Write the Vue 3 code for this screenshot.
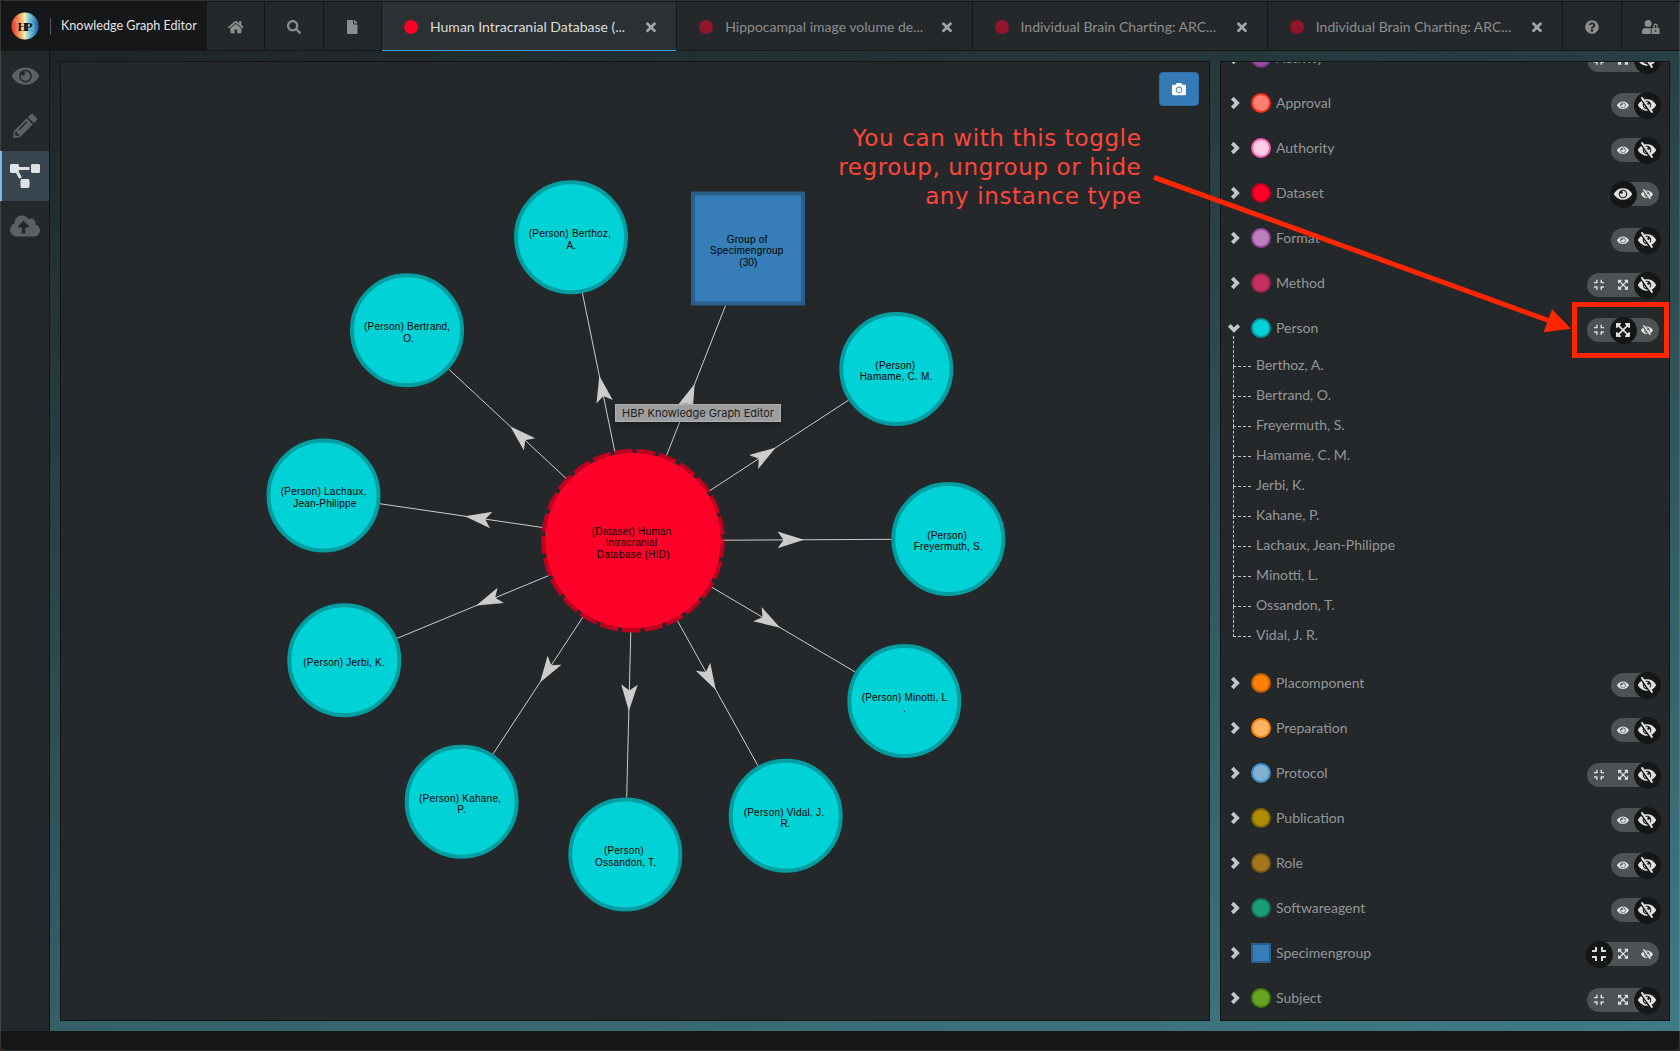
<script setup>
const icons = {
  home: { w: 576, d: 'M488 312.7V456c0 13.3-10.7 24-24 24H348c-6.6 0-12-5.4-12-12V356c0-6.6-5.4-12-12-12h-72c-6.6 0-12 5.4-12 12v112c0 6.6-5.4 12-12 12H112c-13.3 0-24-10.7-24-24V312.7c0-3.6 1.6-7 4.4-9.3l188-154.8c4.4-3.6 10.8-3.6 15.3 0l188 154.8c2.7 2.3 4.3 5.7 4.3 9.3zm83.6-60.9L488 182.9V44.4c0-6.6-5.4-12-12-12h-56c-6.6 0-12 5.4-12 12V117l-89.5-73.7c-17.7-14.6-43.3-14.6-61 0L4.4 251.8c-5.1 4.2-5.8 11.8-1.6 16.9l25.5 31c4.2 5.1 11.8 5.8 16.9 1.6l235.2-193.7c4.4-3.6 10.8-3.6 15.3 0l235.2 193.7c5.1 4.2 12.7 3.5 16.9-1.6l25.5-31c4.2-5.2 3.4-12.7-1.7-16.9z' },
  search: { w: 512, d: 'M505 442.7L405.3 343c-4.5-4.5-10.6-7-17-7H372c27.6-35.3 44-79.7 44-128C416 93.1 322.9 0 208 0S0 93.1 0 208s93.1 208 208 208c48.3 0 92.7-16.4 128-44v16.3c0 6.4 2.5 12.5 7 17l99.7 99.7c9.4 9.4 24.6 9.4 33.9 0l28.3-28.3c9.4-9.4 9.4-24.6.1-34zM208 336c-70.7 0-128-57.2-128-128 0-70.7 57.2-128 128-128 70.7 0 128 57.2 128 128 0 70.7-57.2 128-128 128z' },
  file: { w: 384, d: 'M224 136V0H24C10.7 0 0 10.7 0 24v464c0 13.3 10.7 24 24 24h336c13.3 0 24-10.7 24-24V160H248c-13.2 0-24-10.8-24-24zm160-14.1v6.1H256V0h6.1c6.4 0 12.5 2.5 17 7l97.9 98c4.5 4.5 7 10.6 7 16.9z' },
  times: { w: 352, d: 'M242.72 256l100.07-100.07c12.28-12.28 12.28-32.19 0-44.48l-22.24-22.24c-12.28-12.28-32.19-12.28-44.48 0L176 189.28 75.93 89.21c-12.28-12.28-32.19-12.28-44.48 0L9.21 111.45c-12.28 12.28-12.28 32.19 0 44.48L109.28 256 9.21 356.07c-12.28 12.28-12.28 32.19 0 44.48l22.24 22.24c12.28 12.28 32.2 12.28 44.48 0L176 322.72l100.07 100.07c12.28 12.28 32.2 12.28 44.48 0l22.24-22.24c12.28-12.28 12.28-32.19 0-44.48L242.72 256z' },
  help: { w: 512, d: 'M504 256c0 136.997-111.043 248-248 248S8 392.997 8 256C8 119.083 119.043 8 256 8s248 111.083 248 248zM262.655 90c-54.497 0-89.255 22.957-116.549 63.758-3.536 5.286-2.353 12.415 2.715 16.258l34.699 26.31c5.205 3.947 12.621 3.008 16.665-2.122 17.864-22.658 30.113-35.797 57.303-35.797 20.429 0 45.698 13.148 45.698 32.958 0 14.976-12.363 22.667-32.534 33.976C247.128 238.528 216 254.941 216 296v4c0 6.627 5.373 12 12 12h56c6.627 0 12-5.373 12-12v-1.333c0-28.462 83.186-29.647 83.186-106.667 0-58.002-60.165-102-116.531-102zM256 338c-25.365 0-46 20.635-46 46 0 25.364 20.635 46 46 46s46-20.636 46-46c0-25.365-20.635-46-46-46z' },
  userLock: { w: 640, d: 'M224 256A128 128 0 1 0 96 128a128 128 0 0 0 128 128zm96 64a63.08 63.08 0 0 1 8.1-30.5c-4.8-.5-9.5-1.5-14.5-1.5h-16.7a174.08 174.08 0 0 1-145.8 0h-16.7A134.43 134.43 0 0 0 0 422.4V464a48 48 0 0 0 48 48h280.9a63.54 63.54 0 0 1-8.9-32zm288-32h-32v-80a80 80 0 0 0-160 0v80h-32a32 32 0 0 0-32 32v160a32 32 0 0 0 32 32h224a32 32 0 0 0 32-32V320a32 32 0 0 0-32-32zM496 432a32 32 0 1 1 32-32 32 32 0 0 1-32 32zm32-144h-64v-80a32 32 0 0 1 64 0z' },
  eye: { w: 576, d: 'M569.354 231.631C512.969 135.949 407.81 72 288 72 168.14 72 63.004 135.994 6.646 231.631a47.999 47.999 0 0 0 0 48.739C63.031 376.051 168.19 440 288 440c119.86 0 224.996-63.994 281.354-159.631a47.997 47.997 0 0 0 0-48.738zM288 392c-75.162 0-136-60.827-136-136 0-75.162 60.826-136 136-136 75.162 0 136 60.826 136 136 0 75.162-60.826 136-136 136zm104-136c0 57.438-46.562 104-104 104s-104-46.562-104-104c0-17.708 4.431-34.379 12.236-48.973l-.001.032c0 23.651 19.173 42.823 42.824 42.823s42.824-19.173 42.824-42.823c0-23.651-19.173-42.824-42.824-42.824l-.032.001C253.621 156.431 270.292 152 288 152c57.438 0 104 46.562 104 104z' },
  eyeSlash: { w: 576, d: 'M286.693 391.984l32.579 46.542A333.958 333.958 0 0 1 288 440C168.19 440 63.031 376.051 6.646 280.369a47.999 47.999 0 0 1 0-48.739c24.023-40.766 56.913-75.775 96.024-102.537l57.077 81.539C154.736 224.82 152 240.087 152 256c0 74.736 60.135 135.282 134.693 135.984zm282.661-111.615c-31.667 53.737-78.747 97.46-135.175 125.475l.011.015 41.47 59.2c7.6 10.86 4.96 25.82-5.9 33.42l-13.11 9.18c-10.86 7.6-25.82 4.96-33.42-5.9L100.34 46.94c-7.6-10.86-4.96-25.82 5.9-33.42l13.11-9.18c10.86-7.6 25.82-4.96 33.42 5.9l51.038 72.617C230.68 75.776 258.905 72 288 72c119.81 0 224.969 63.949 281.354 159.631a48.002 48.002 0 0 1 0 48.738zM424 256c0-75.174-60.838-136-136-136-17.939 0-35.056 3.473-50.729 9.772l19.299 27.058c25.869-8.171 55.044-6.163 80.4 7.41h-.03c-23.65 0-42.82 19.17-42.82 42.82 0 23.626 19.147 42.82 42.82 42.82 23.65 0 42.82-19.17 42.82-42.82v-.03c18.462 34.49 16.312 77.914-8.25 110.95v.01l19.314 27.061C411.496 321.2 424 290.074 424 256zM262.014 356.727l-77.53-110.757c-5.014 52.387 29.314 98.354 77.53 110.757z' },
  pencil: { w: 512, d: 'M497.9 142.1l-46.1 46.1c-4.7 4.7-12.3 4.7-17 0l-111-111c-4.7-4.7-4.7-12.3 0-17l46.1-46.1c18.7-18.7 49.1-18.7 67.9 0l60.1 60.1c18.8 18.7 18.8 49.1 0 67.9zM284.2 99.8L21.6 362.4.4 483.9c-2.9 16.4 11.4 30.6 27.8 27.8l121.5-21.3 262.6-262.6c4.7-4.7 4.7-12.3 0-17l-111-111c-4.8-4.7-12.4-4.7-17.1 0zM124.1 339.9c-5.5-5.5-5.5-14.3 0-19.8l154-154c5.5-5.5 14.3-5.5 19.8 0s5.5 14.3 0 19.8l-154 154c-5.5 5.5-14.3 5.5-19.8 0zM88 424h48v36.3l-64.5 11.3-31.1-31.1L51.7 376H88v48z' },
  diagram: { w: 640, d: 'M384 320H256c-17.67 0-32 14.33-32 32v128c0 17.67 14.33 32 32 32h128c17.67 0 32-14.33 32-32V352c0-17.67-14.33-32-32-32zM192 32c0-17.67-14.33-32-32-32H32C14.33 0 0 14.33 0 32v128c0 17.67 14.33 32 32 32h95.72l73.16 128.04C211.98 300.98 232.4 288 256 288h.28L192 175.51V128h224V64H192V32zM608 0H480c-17.67 0-32 14.33-32 32v128c0 17.67 14.33 32 32 32h128c17.67 0 32-14.33 32-32V32c0-17.67-14.33-32-32-32z' },
  cloud: { w: 640, d: 'M537.6 226.6c4.1-10.7 6.4-22.4 6.4-34.6 0-53-43-96-96-96-19.7 0-38.1 6-53.3 16.2C367 64.2 315.3 32 256 32c-88.4 0-160 71.6-160 160 0 2.7.1 5.4.2 8.1C40.2 219.8 0 273.2 0 336c0 79.5 64.5 144 144 144h368c70.7 0 128-57.3 128-128 0-61.9-44-113.6-102.4-125.4zM393.4 288H328v112c0 8.8-7.2 16-16 16h-48c-8.8 0-16-7.2-16-16V288h-65.4c-14.3 0-21.4-17.2-11.3-27.3l105.4-105.4c6.2-6.2 16.4-6.2 22.6 0l105.4 105.4c10.1 10.1 2.9 27.3-11.3 27.3z' },
  camera: { w: 512, d: 'M512 144v288c0 26.5-21.5 48-48 48H48c-26.5 0-48-21.5-48-48V144c0-26.5 21.5-48 48-48h88l12.3-32.9c7-18.7 24.9-31.1 44.9-31.1h125.5c20 0 37.9 12.4 44.9 31.1L376 96h88c26.5 0 48 21.5 48 48zM376 288c0-66.2-53.8-120-120-120s-120 53.8-120 120 53.8 120 120 120 120-53.8 120-120zm-32 0c0 48.5-39.5 88-88 88s-88-39.5-88-88 39.5-88 88-88 88 39.5 88 88z' },
  compress: { w: 448, d: 'M436 192H312c-13.3 0-24-10.7-24-24V44c0-6.6 5.4-12 12-12h40c6.6 0 12 5.4 12 12v84h84c6.6 0 12 5.4 12 12v40c0 6.6-5.4 12-12 12zm-276-24V44c0-6.6-5.4-12-12-12h-40c-6.6 0-12 5.4-12 12v84H12c-6.6 0-12 5.4-12 12v40c0 6.6 5.4 12 12 12h124c13.3 0 24-10.7 24-24zm0 300V344c0-13.3-10.7-24-24-24H12c-6.6 0-12 5.4-12 12v40c0 6.6 5.4 12 12 12h84v84c0 6.6 5.4 12 12 12h40c6.6 0 12-5.4 12-12zm192 0v-84h84c6.6 0 12-5.4 12-12v-40c0-6.6-5.4-12-12-12H312c-13.3 0-24 10.7-24 24v124c0 6.6 5.4 12 12 12h40c6.6 0 12-5.4 12-12z' },
  expand: { w: 448, d: 'M448 344v112a23.94 23.94 0 0 1-24 24H312c-21.39 0-32.09-25.9-17-41l36.2-36.2L224 295.6 116.77 402.9 153 439c15.09 15.1 4.39 41-17 41H24a23.94 23.94 0 0 1-24-24V344c0-21.4 25.89-32.1 41-17l36.19 36.2L184.46 256 77.18 148.7 41 185c-15.1 15.1-41 4.4-41-17V56a23.94 23.94 0 0 1 24-24h112c21.39 0 32.09 25.9 17 41l-36.2 36.2L224 216.4l107.23-107.3L295 73c-15.09-15.1-4.39-41 17-41h112a23.94 23.94 0 0 1 24 24v112c0 21.4-25.89 32.1-41 17l-36.19-36.2L263.54 256l107.28 107.3L407 327.1c15.1-15.2 41-4.5 41 16.9z' },
}
const box = (name) => `0 0 ${icons[name].w} 512`
const iconWidth = (name, on) => {
  const size = on ? 16 : icons[name].w > 500 ? 10.6 : 11.6
  return `${(icons[name].w / 512) * size}px`
}

const tools = ['home', 'search', 'file']
const tabs = [
  { label: 'Human Intracranial Database (...', active: true },
  { label: 'Hippocampal image volume de...' },
  { label: 'Individual Brain Charting: ARC...' },
  { label: 'Individual Brain Charting: ARC...' },
]
const accountTools = ['help', 'userLock']
const modes = ['eye', 'pencil', 'diagram', 'cloud']

const two = ['eye', 'eyeSlash']
const three = ['compress', 'expand', 'eyeSlash']
const types = [
  { name: 'Activity', fill: '#984ea3', edge: '#7b3a86', options: three, on: 'eyeSlash' },
  { name: 'Approval', fill: '#fb8072', edge: '#ff2a14', options: two, on: 'eyeSlash' },
  { name: 'Authority', fill: '#fccde5', edge: '#ff58ae', options: two, on: 'eyeSlash' },
  { name: 'Dataset', fill: '#ff0029', edge: '#b8001e', options: two, on: 'eye' },
  { name: 'Format', fill: '#bc80bd', edge: '#96499a', options: two, on: 'eyeSlash' },
  { name: 'Method', fill: '#c42e60', edge: '#96254b', options: three, on: 'eyeSlash' },
  {
    name: 'Person', fill: '#00d2d5', edge: '#009b9e', options: three, on: 'expand',
    items: ['Berthoz, A.', 'Bertrand, O.', 'Freyermuth, S.', 'Hamame, C. M.', 'Jerbi, K.', 'Kahane, P.', 'Lachaux, Jean-Philippe', 'Minotti, L.', 'Ossandon, T.', 'Vidal, J. R.'],
  },
  { name: 'Placomponent', fill: '#ff7f00', edge: '#b85d06', options: two, on: 'eyeSlash' },
  { name: 'Preparation', fill: '#fdb462', edge: '#fb8406', options: two, on: 'eyeSlash' },
  { name: 'Protocol', fill: '#80b1d3', edge: '#3f88c0', options: three, on: 'eyeSlash' },
  { name: 'Publication', fill: '#af8d00', edge: '#7c6500', options: two, on: 'eyeSlash' },
  { name: 'Role', fill: '#a6761d', edge: '#7d5917', options: two, on: 'eyeSlash' },
  { name: 'Softwareagent', fill: '#1b9e77', edge: '#15735a', options: two, on: 'eyeSlash' },
  { name: 'Specimengroup', fill: '#377eb8', edge: '#295d8a', square: true, options: three, on: 'compress' },
  { name: 'Subject', fill: '#66a61e', edge: '#4a7a16', options: three, on: 'eyeSlash' },
]

// Graph coordinates share the window's origin; the canvas viewBox offsets them.
const hub = { x: 633, y: 540.7, r: 91.8 }
const hubLines = [
  ['(Dataset) Human', 631.5, 534.7, 79.7],
  ['Intracranial', 631.3, 545.7, 51.3],
  ['Database (HID)', 633.2, 557.7, 73],
]
const nodes = [
  { x: 571, y: 237.2, lines: [['(Person) Berthoz,', 569.7, 236.7, 82], ['A.', 571.3, 249, 9.5]] },
  { x: 748, y: 248.5, square: true, lines: [['Group of', 747, 242.7, 40.7], ['Specimengroup', 746.7, 253.7, 73.3], ['(30)', 748.3, 265.7, 18]] },
  { x: 896.3, y: 369, lines: [['(Person)', 895.2, 369, 39.7], ['Hamame, C. M.', 896, 380, 72.7]] },
  { x: 948.3, y: 539, lines: [['(Person)', 947, 538.7, 39.7], ['Freyermuth, S.', 948.2, 549.7, 69]] },
  { x: 904.3, y: 701, lines: [['(Person) Minotti, L', 904.3, 700.7, 85.3], ['.', 904.3, 712, 2.8]] },
  { x: 785.7, y: 815.7, lines: [['(Person) Vidal, J.', 783.8, 815.7, 80.3], ['R.', 785.3, 826.7, 9.6]] },
  { x: 625.3, y: 854.5, lines: [['(Person)', 623.8, 853.7, 39.7], ['Ossandon, T.', 625.5, 865.7, 61]] },
  { x: 461.7, y: 801.7, lines: [['(Person) Kahane,', 460, 801.7, 82], ['P.', 461.5, 812.7, 8.6]] },
  { x: 344.3, y: 660.2, lines: [['(Person) Jerbi, K.', 344, 665.7, 81.5]] },
  { x: 323.5, y: 495.5, lines: [['(Person) Lachaux,', 323.5, 494.7, 85.7], ['Jean-Philippe', 324.8, 506.7, 63]] },
  { x: 407, y: 330.3, lines: [['(Person) Bertrand,', 407, 329.7, 86], ['O.', 408.3, 341.7, 10.3]] },
]
const edges = nodes.map((n) => {
  const dx = n.x - hub.x
  const dy = n.y - hub.y
  const len = Math.hypot(dx, dy)
  const ux = dx / len
  const uy = dy / len
  const end = len - (n.square ? 57 / Math.abs(uy) : 57)
  const mid = (hub.r + end) / 2 - 4
  return {
    x1: hub.x + ux * (hub.r - 3), y1: hub.y + uy * (hub.r - 3),
    x2: hub.x + ux * end, y2: hub.y + uy * end,
    arrow: `translate(${hub.x + ux * mid} ${hub.y + uy * mid}) rotate(${(Math.atan2(dy, dx) * 180) / Math.PI})`,
  }
})
const labels = [...hubLines, ...nodes.flatMap((n) => n.lines)]
</script>

<template>
  <div class="window">
    <header class="topbar">
      <div class="brand">
        <svg class="logo" viewBox="0 0 28 28">
          <defs>
            <linearGradient id="brain" x1="0" x2="1" y1="0" y2="0">
              <stop offset="0" stop-color="#e2313a" />
              <stop offset=".2" stop-color="#ee7748" />
              <stop offset=".38" stop-color="#f7bd6c" />
              <stop offset=".49" stop-color="#fdf0b0" />
              <stop offset=".53" stop-color="#c3e6d6" />
              <stop offset=".72" stop-color="#5bb4cf" />
              <stop offset="1" stop-color="#2457a4" />
            </linearGradient>
          </defs>
          <circle cx="14" cy="14" r="13.6" fill="url(#brain)" />
          <g fill="none" stroke="#fff" stroke-opacity=".28" stroke-width="1">
            <path d="M3 9c3-1 4 1 3 3M5 19c2-2 4 0 4 3M8 4c1 2 3 1 4 3M19 3c0 3 3 2 4 5M24 14c-3 0-2 3-1 5M18 24c0-3 3-2 4-4" />
          </g>
          <text class="logo-letter" x="6.6" y="18.6">H</text>
          <text class="logo-letter" x="13.8" y="18.6">P</text>
        </svg>
        <span class="divider"></span>
        <span class="title">Knowledge Graph Editor</span>
      </div>
      <button v-for="t in tools" :key="t" class="tool" :class="t">
        <svg :viewBox="box(t)" class="glyph"><path :d="icons[t].d" /></svg>
      </button>
      <div v-for="(tab, i) in tabs" :key="i" class="tab" :class="{ active: tab.active }">
        <span class="tab-dot"></span>
        <span class="tab-label">{{ tab.label }}</span>
        <svg :viewBox="box('times')" class="close"><path :d="icons.times.d" /></svg>
      </div>
      <button v-for="t in accountTools" :key="t" class="tool" :class="t">
        <svg :viewBox="box(t)" class="glyph"><path :d="icons[t].d" /></svg>
      </button>
    </header>

    <div class="body">
      <nav class="modes">
        <div v-for="m in modes" :key="m" class="mode" :class="{ active: m === 'diagram' }">
          <svg :viewBox="box(m)" :class="m"><path :d="icons[m].d" /></svg>
        </div>
      </nav>

      <main class="stage">
        <section class="panel graph">
          <svg class="canvas" viewBox="61 62 1148 958">
            <g v-for="(e, i) in edges" :key="'e' + i">
              <line :x1="e.x1" :y1="e.y1" :x2="e.x2" :y2="e.y2" class="edge" />
              <path d="M0 0L-26.5 -8.3L-20.5 0L-26.5 8.3Z" :transform="e.arrow" class="arrow" />
            </g>
            <circle :cx="hub.x" :cy="hub.y" r="88" fill="#ff0029" />
            <circle :cx="hub.x" :cy="hub.y" r="89.8" class="hub-ring" pathLength="360" :transform="`rotate(-1.2 ${hub.x} ${hub.y})`" />
            <g v-for="(n, i) in nodes" :key="'n' + i">
              <rect v-if="n.square" :x="n.x - 55" :y="n.y - 55" width="110" height="110" class="group-node" />
              <circle v-else :cx="n.x" :cy="n.y" r="55" class="person-node" />
            </g>
            <text v-for="(l, i) in labels" :key="'t' + i" class="node-label" :x="l[1]" :y="l[2]" :textLength="l[3]">{{ l[0] }}</text>
          </svg>
          <button class="snapshot">
            <svg :viewBox="box('camera')"><path :d="icons.camera.d" /></svg>
          </button>
          <div class="tooltip">HBP Knowledge Graph Editor</div>
        </section>

        <aside class="panel legend">
          <div class="legend-scroll">
            <div v-for="t in types" :key="t.name">
              <div class="type">
                <svg v-if="t.items" class="chevron down" viewBox="0 0 12 9"><polyline points="1.2,1.3 6,6.1 10.8,1.3" /></svg>
                <svg v-else class="chevron" viewBox="0 0 9 12"><polyline points="1.3,1.2 6.1,6 1.3,10.8" /></svg>
                <span class="swatch" :class="{ square: t.square }" :style="{ background: t.fill, borderColor: t.edge }"></span>
                <span class="type-name">{{ t.name }}</span>
                <span class="toggle" :class="{ raised: t.on === 'eye' || t.on === 'compress' }">
                  <span v-for="o in t.options" :key="o" class="option" :class="{ on: o === t.on }">
                    <svg :viewBox="box(o)" :style="{ width: iconWidth(o, o === t.on) }"><path :d="icons[o].d" /></svg>
                  </span>
                </span>
              </div>
              <ul v-if="t.items" class="instances">
                <li v-for="name in t.items" :key="name">{{ name }}</li>
              </ul>
            </div>
          </div>
        </aside>
      </main>
    </div>
    <footer class="statusbar"></footer>

    <p class="note">You can with this toggle<br />regroup, ungroup or hide<br />any instance type</p>
    <svg class="pointer" viewBox="0 0 1680 1051">
      <line x1="1154" y1="177.3" x2="1550" y2="321" />
      <polygon points="1571,328.7 1552,309.3 1543.7,332.2" />
      <rect x="1574.5" y="304.5" width="92" height="51" />
    </svg>
    <div class="frame"></div>
  </div>
</template>

<style>
body {
  margin: 0;
  background: #35231f;
}
</style>

<style scoped>
.window {
  position: relative;
  box-sizing: border-box;
  width: 1680px;
  height: 1051px;
  overflow: hidden;
  display: flex;
  flex-direction: column;
  border-radius: 0 0 6px 6px;
  font-family: Lato, sans-serif;
  font-size: 14px;
  color: #94979a;
  background: linear-gradient(165deg, #1c2022, #407c87);
}
button {
  border: 0;
  padding: 0;
  margin: 0;
}
svg {
  display: block;
  fill: currentColor;
}
.topbar {
  box-sizing: border-box;
  height: 51px;
  flex: none;
  display: flex;
  padding-top: 2px;
  background: #161719;
  gap: 1px;
}
.brand {
  width: 206px;
  flex: none;
  display: flex;
  align-items: center;
}
.logo {
  flex: none;
  width: 28px;
  height: 28px;
  margin: 0 0 1px 11px;
}
.logo-letter {
  font: bold 12.5px "Liberation Serif", serif;
  fill: #10131c;
}
.divider {
  flex: none;
  width: 1px;
  height: 17px;
  margin: 0 10px 0 11px;
  background: #55585a;
}
.title {
  color: #e3e4e4;
  white-space: nowrap;
  font-size: 12.6px;
  margin-top: -2px;
}
.tool {
  width: 57px;
  height: 48px;
  display: flex;
  align-items: center;
  justify-content: center;
  background: #24282a;
  color: #8c8e8f;
}
.tool.search {
  width: 58px;
}
.tool.userLock {
  flex: 1;
}
.tool.help {
  width: 58px;
}
.glyph {
  height: 14px;
  margin-top: 2px;
}
.tab {
  box-sizing: border-box;
  width: 294.25px;
  flex: none;
  height: 48px;
  display: flex;
  align-items: center;
  padding: 2px 20px 0 22px;
  background: #24282a;
  color: #8c8e8f;
}
.tab.active {
  height: 49px;
  border-bottom: 1px solid #3fa2e6;
  background: #2b3032;
  color: #dcdddd;
}
.tab-dot {
  width: 14px;
  height: 14px;
  border-radius: 50%;
  background: #91152a;
}
.active .tab-dot {
  background: #ff0029;
}
.tab-label {
  flex: 1;
  margin: -2px 0 0 12px;
  white-space: nowrap;
}
.close {
  height: 14.5px;
  color: #a3a5a6;
}
.body {
  flex: 1;
  display: flex;
  min-height: 0;
}
.modes {
  box-sizing: border-box;
  width: 50px;
  border-right: 1px solid #121415;
  background: #24282a;
}
.mode {
  box-sizing: border-box;
  height: 50px;
  display: flex;
  align-items: center;
  justify-content: center;
  padding-left: 1px;
  color: #5d6163;
}
.mode.active {
  background: #38454e;
  border-left: 2px solid #6cb5ec;
  padding: 0 1px 0 0;
  color: #e0e1e2;
}
.mode svg {
  height: 24px;
}
.stage {
  flex: 1;
  display: flex;
  gap: 10px;
  padding: 10px;
}
.panel {
  box-sizing: border-box;
  height: 960px;
  background: #24282a;
  border: 1px solid #121415;
  overflow: hidden;
}
.graph {
  position: relative;
  width: 1150px;
}
.canvas {
  width: 1148px;
  height: 958px;
}
.edge {
  stroke: #ccc;
  stroke-width: 1;
}
.arrow {
  fill: #ccc;
}
.hub-ring {
  fill: none;
  stroke: #bf001f;
  stroke-width: 4;
  stroke-dasharray: 11.8 2.6;
}
.person-node {
  fill: #00d2d5;
  stroke: #009ea0;
  stroke-width: 4;
}
.group-node {
  fill: #377eb8;
  stroke: #295f8a;
  stroke-width: 4;
}
.node-label {
  font: 10px "Liberation Sans", sans-serif;
  fill: #000;
  text-anchor: middle;
}
.snapshot {
  position: absolute;
  top: 10px;
  right: 10px;
  box-sizing: border-box;
  width: 40px;
  height: 34px;
  display: flex;
  align-items: center;
  justify-content: center;
  border: 1px solid #2e6da4;
  border-radius: 4px;
  background: #337ab7;
  color: #fff;
}
.snapshot svg {
  height: 14px;
}
.tooltip {
  position: absolute;
  left: 554px;
  top: 342px;
  box-sizing: border-box;
  width: 166px;
  height: 18px;
  border: 1px solid #b0b0b0;
  background: #9d9e9f;
  color: #1f2021;
  font: 11px/16px Inter, sans-serif;
  text-align: center;
  white-space: nowrap;
  box-shadow: 0 2px 5px rgba(0, 0, 0, 0.35);
}
.legend {
  width: 450px;
}
.legend-scroll {
  margin-top: -27px;
}
.type {
  box-sizing: border-box;
  height: 45px;
  display: flex;
  align-items: center;
  padding: 13px 10px 12px 10px;
}
.chevron {
  flex: none;
  width: 9px;
  height: 12px;
  margin-right: 11px;
  overflow: visible;
  fill: none;
  stroke: #c3c6c8;
  stroke-width: 3.8;
}
.chevron.down {
  width: 12px;
  height: 9px;
  margin: 0 11px 0 -3px;
}
.swatch {
  box-sizing: border-box;
  width: 20px;
  height: 20px;
  border: 2px solid;
  border-radius: 50%;
}
.swatch.square {
  border-radius: 0;
}
.type-name {
  margin-left: 5px;
  line-height: 20px;
}
.toggle {
  display: flex;
  height: 24px;
  margin: 4px 0 0 auto;
  border-radius: 12px;
  background: #4d5355;
  color: #dfe0e1;
}
.toggle.raised {
  margin-top: 2px;
}
.option {
  width: 24px;
  height: 24px;
  display: flex;
  align-items: center;
  justify-content: center;
}
.option svg {
  flex: none;
}
.option.on {
  width: 27px;
  height: 27px;
  margin: -1.5px;
  border-radius: 50%;
  background: #141618;
}
.instances {
  list-style: none;
  margin: -15px 0 0 12px;
  padding: 15px 0 10px;
}
.instances li {
  position: relative;
  height: 30px;
  line-height: 30px;
  padding-left: 23px;
}
.instances li::before {
  content: "";
  position: absolute;
  left: 0;
  top: -14px;
  width: 17px;
  height: 30px;
  border-left: 1px dashed #c3c6c8;
  border-bottom: 1px dashed #c3c6c8;
}
.statusbar {
  height: 20px;
  flex: none;
  background: #161719;
}
.note {
  position: absolute;
  top: 124px;
  right: 538.6px;
  margin: 0;
  font: 23px/29px "DejaVu Sans", Verdana, sans-serif;
  letter-spacing: 0.62px;
  color: #ff453a;
  text-align: right;
  white-space: nowrap;
}
.pointer {
  position: absolute;
  left: 0;
  top: 0;
  width: 1680px;
  height: 1051px;
  pointer-events: none;
  fill: #ff2600;
}
.pointer line {
  stroke: #ff2600;
  stroke-width: 5;
}
.pointer rect {
  fill: none;
  stroke: #ff2600;
  stroke-width: 5;
}
.frame {
  position: absolute;
  inset: 0;
  border: 1px solid rgba(255, 255, 255, 0.12);
  border-radius: 0 0 6px 6px;
  pointer-events: none;
}
</style>
